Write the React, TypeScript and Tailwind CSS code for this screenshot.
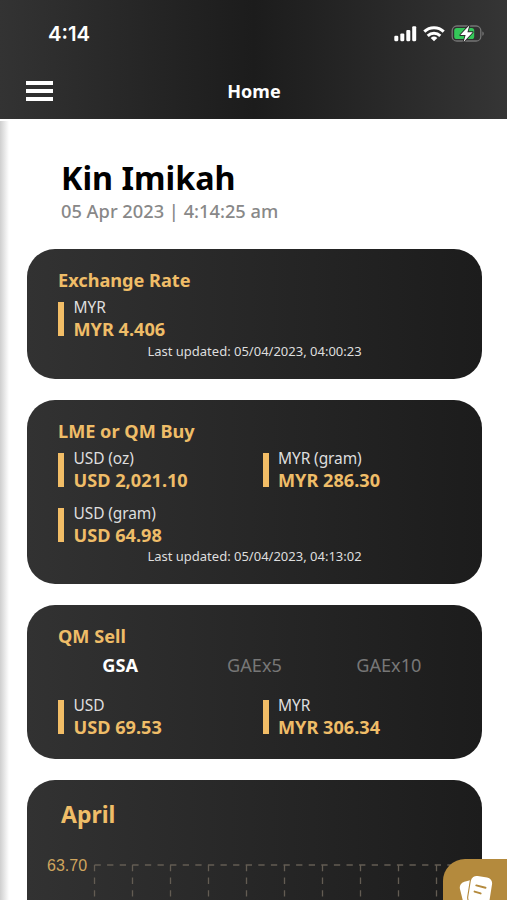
import React from 'react';

const cardClass =
  'w-[455px] rounded-[28px] bg-linear-to-r from-[#323232] to-[#1c1c1c] pt-[19px] pl-[31px]';

const gridColumns = [94.5, 132.5, 170.5, 208.5, 246.5, 284.5, 322.5, 360.5, 398.5, 436.5];

const CardTitle: React.FC<{ children: React.ReactNode }> = ({ children }) => (
  <h2 className="text-[18.15px] leading-6 font-bold text-[#efbd68] whitespace-nowrap">{children}</h2>
);

const Rate: React.FC<{ label: string; value: string }> = ({ label, value }) => (
  <div className="flex h-11 w-[204.5px] gap-[9.5px]">
    <div className="mt-[6px] h-[34px] w-[6px] bg-[#f2bd66]" />
    <div className="whitespace-nowrap">
      <p className="text-[15.5px] leading-[22px] tracking-[-0.1px] text-[#dedede]">{label}</p>
      <p className="text-[18.15px] leading-[22px] font-bold text-[#efbd68]">{value}</p>
    </div>
  </div>
);

const LastUpdated: React.FC<{ time: string }> = ({ time }) => (
  <p className="mt-[1.5px] -ml-[31px] text-center text-[13px] leading-[18px] text-[#dedede]">
    Last updated: {time}
  </p>
);

const StatusIcons = () => (
  <svg width="92" height="20" viewBox="0 0 92 20" fill="none">
    {/* signal */}
    <g fill="#fff">
      <rect x="1.3" y="11.8" width="4" height="5.4" rx="1.1" />
      <rect x="7.3" y="9.4" width="4" height="7.8" rx="1.1" />
      <rect x="13.3" y="6" width="4" height="11.2" rx="1.1" />
      <rect x="19.2" y="2.2" width="4" height="15" rx="1.1" />
    </g>
    {/* wifi */}
    <g stroke="#fff" strokeWidth="3">
      <path d="M31.3 7.6a14 14 0 0 1 19.4 0" />
      <path d="M34.7 11.8a9.2 9.2 0 0 1 12.6 0" />
    </g>
    <path d="M37.7 13.9a5 5 0 0 1 6.6 0L41 17.3z" fill="#fff" />
    {/* battery */}
    <rect x="59.2" y="2" width="28.6" height="15" rx="4.6" stroke="#747474" strokeWidth="1.3" />
    <path d="M89.3 7.4c2 .7 2 3.6 0 4.4z" fill="#747474" />
    <rect x="61.2" y="4" width="20" height="11" rx="2.6" fill="#34c759" />
    <path
      d="M76.4 1.2 67.3 11h5.3l-2 7 9.1-9.8h-5.3z"
      fill="#fff"
      stroke="#2b2b2b"
      strokeWidth="1.8"
      paintOrder="stroke"
      strokeLinejoin="round"
    />
  </svg>
);

const Header = () => (
  <header className="h-[119px] bg-linear-to-r from-[#333333] via-[#1c1c1c] to-[#353535] text-white">
    <div className="flex h-[67px] items-center justify-between pr-[22px] pl-[48px]">
      <span className="font-['Inter','Noto_Sans',sans-serif] text-[20.3px] leading-6 font-semibold">4:14</span>
      <StatusIcons />
    </div>
    <div className="grid h-[47px] grid-cols-[1fr_auto_1fr] items-center">
      <button className="ml-[26px] flex w-[27px] flex-col gap-1" aria-label="Menu">
        <span className="h-1 w-full bg-white" />
        <span className="h-1 w-full bg-white" />
        <span className="h-1 w-full bg-white" />
      </button>
      <h1 className="pl-px text-[18px] leading-6 font-bold">Home</h1>
    </div>
  </header>
);

const PriceChart = () => (
  <svg className="-ml-[31px]" width="455" height="60" viewBox="27 840 455 60">
    <text x="47" y="870.5" fontSize="16" fill="#cfa55e" className="font-['Liberation_Sans',sans-serif]">
      63.70
    </text>
    <g stroke="#635c53" strokeWidth="1.3" strokeDasharray="6.3 6.3">
      <path d="M94.5 865H474" />
      {gridColumns.map((x) => (
        <path key={x} d={`M${x} 865V900`} />
      ))}
    </g>
  </svg>
);

const App: React.FC = () => {
  return (
    <div className="relative h-[900px] w-[507px] overflow-hidden bg-white font-['Noto_Sans','Open_Sans',sans-serif]">
      <Header />
      <div className="absolute top-[121px] bottom-0 left-0 w-[9px] bg-linear-to-r from-[#cfcfcf] to-white" />

      <main className="pl-[27px]">
        <div className="h-[130px] pt-[37px] pl-[34px]">
          <h2 className="text-[32.3px] leading-[43px] font-bold text-black">Kin Imikah</h2>
          <p className="-mt-px text-[18.25px] leading-[26px] font-medium text-[#888888]">
            05 Apr 2023 | 4:14:25 am
          </p>
        </div>

        <div className="flex flex-col gap-[21px]">
          <section className={`${cardClass} h-[130px]`}>
            <CardTitle>Exchange Rate</CardTitle>
            <div className="mt-1">
              <Rate label="MYR" value="MYR 4.406" />
            </div>
            <LastUpdated time="05/04/2023, 04:00:23" />
          </section>

          <section className={`${cardClass} h-[184px]`}>
            <CardTitle>LME or QM Buy</CardTitle>
            <div className="mt-1 flex flex-wrap gap-y-[10.5px]">
              <Rate label="USD (oz)" value="USD 2,021.10" />
              <Rate label="MYR (gram)" value="MYR 286.30" />
              <Rate label="USD (gram)" value="USD 64.98" />
            </div>
            <LastUpdated time="05/04/2023, 04:13:02" />
          </section>

          <section className={`${cardClass} h-[154px]`}>
            <CardTitle>QM Sell</CardTitle>
            <div className="mt-[5px] mr-[26px] -ml-[5px] grid grid-cols-3 text-center text-[18.15px] leading-6">
              <span className="font-bold text-white">GSA</span>
              <span className="text-[#777777]">GAEx5</span>
              <span className="text-[#777777]">GAEx10</span>
            </div>
            <div className="mt-[17px] flex">
              <Rate label="USD" value="USD 69.53" />
              <Rate label="MYR" value="MYR 306.34" />
            </div>
          </section>

          <section className={`${cardClass} h-[300px]`}>
            <h2 className="h-[41px] pl-[3px] text-[23px] leading-[31px] font-bold text-[#efbd68]">April</h2>
            <PriceChart />
          </section>
        </div>
      </main>

      <button
        className="absolute right-0 bottom-0 h-[41px] w-[64px] overflow-hidden rounded-tl-[22px] bg-[#b48a3d]"
        aria-label="News"
      >
        <svg width="64" height="41" viewBox="443 859 64 41">
          <rect x="461.5" y="880.5" width="20" height="27" rx="6" fill="#fff" transform="rotate(-14 471 894)" />
          <rect
            x="469.5"
            y="876.5"
            width="21.5"
            height="28"
            rx="6"
            fill="#fff"
            stroke="#b48a3d"
            strokeWidth="2.2"
            paintOrder="stroke"
            transform="rotate(9 480 890)"
          />
          <path
            d="m476.3 885.4 9.2 2.4M474.6 891.6l6 1.8"
            stroke="#b48a3d"
            strokeWidth="2"
            strokeLinecap="round"
          />
        </svg>
      </button>
    </div>
  );
};

export default App;
